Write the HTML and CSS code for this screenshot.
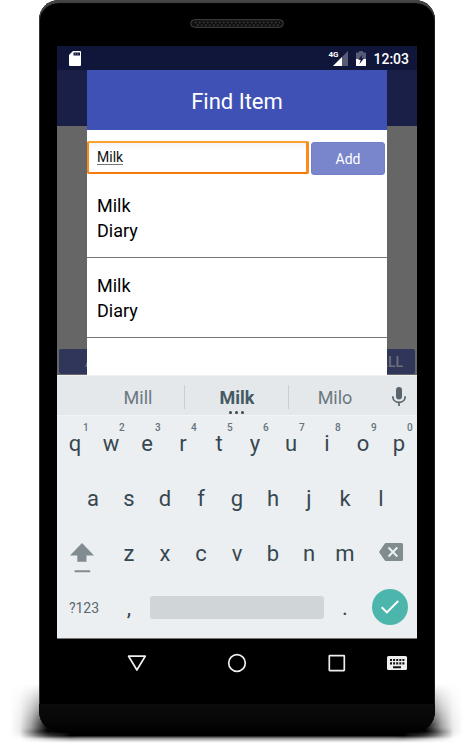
FILE: index.html
```html
<!DOCTYPE html>
<html lang="en">
<head>
<meta charset="utf-8">
<title>Find Item</title>
<link rel="stylesheet" href="styles.css">
</head>
<body>
<div class="stage">
  <div class="floor-shadow"></div>
  <div class="side-shadow side-left"></div>
  <div class="side-shadow side-right"></div>
  <main class="phone">
    <div class="earpiece">
      <svg width="94" height="9" viewBox="0 0 94 9"><rect x=".7" y=".7" width="92.6" height="7.6" rx="3.8" fill="#111" stroke="#454545"/><path d="M5 3.5H90M7 6H90" stroke="#3d3d3d" stroke-width="1.5" stroke-dasharray="1.5 2.5"/></svg>
    </div>
    <div class="screen">
      <header class="status">
        <svg class="sd" width="12" height="15" viewBox="0 0 12 15"><path d="M4 0H11Q12 0 12 1V14Q12 15 11 15H1Q0 15 0 14V4Z" fill="#fff"/><path d="M4.5 1.5H11V4.5H4.5Z" fill="#10153a"/><path d="M6.2 1.5V4M8.6 1.5V4" stroke="#9a9cae" stroke-width=".6"/></svg>
        <div class="status-right">
          <span class="net">4G</span>
          <svg class="signal" width="15" height="15" viewBox="0 0 15 15"><path d="M15 0V15H0Z" fill="#585b75"/><path d="M9 6V15H0Z" fill="#fff"/></svg>
          <svg class="battery" width="10" height="15" viewBox="0 0 10 15"><path d="M3 0H7V1.5H10V8H0V1.5H3Z" fill="#585b75"/><path d="M0 8H10V15H0Z" fill="#fff"/><path d="M6.4 3.6L2.2 8.8H4.7L3.4 13L8 7.4H5.6Z" fill="#10153a"/></svg>
          <span class="time">12:03</span>
        </div>
      </header>
      <section class="content">
        <div class="backdrop">
          <div class="appbar"></div>
          <div class="under"></div>
          <div class="bottom-actions"><span class="act">A</span><span class="act act-end">ALL</span></div>
        </div>
        <section class="dialog">
          <h1>Find Item</h1>
          <div class="search"><div class="field"><u>Milk</u></div><button class="add">Add</button></div>
          <div class="item"><p>Milk</p><p>Diary</p></div>
          <div class="item"><p>Milk</p><p>Diary</p></div>
        </section>
      </section>
      <section class="keyboard">
        <div class="suggestions">
          <span class="sug">Mill</span>
          <span class="sug sug-main">Milk<i class="dots"><b></b><b></b><b></b></i></span>
          <span class="sug sug-last">Milo</span>
          <svg class="mic" width="14" height="20" viewBox="0 0 14 20"><rect x="4" y="0" width="6" height="12.4" rx="3" fill="#58666c"/><path d="M.8 9.2C.8 13 3.6 15.4 7 15.4S13.2 13 13.2 9.2M7 15.4V19" fill="none" stroke="#58666c" stroke-width="1.7"/></svg>
        </div>
        <div class="row row-top">
          <span class="key">q<sup>1</sup></span><span class="key">w<sup>2</sup></span><span class="key">e<sup>3</sup></span><span class="key">r<sup>4</sup></span><span class="key">t<sup>5</sup></span><span class="key">y<sup>6</sup></span><span class="key">u<sup>7</sup></span><span class="key">i<sup>8</sup></span><span class="key">o<sup>9</sup></span><span class="key">p<sup>0</sup></span>
        </div>
        <div class="row">
          <span class="key">a</span><span class="key">s</span><span class="key">d</span><span class="key">f</span><span class="key">g</span><span class="key">h</span><span class="key">j</span><span class="key">k</span><span class="key">l</span>
        </div>
        <div class="row row-third">
          <span class="wide"><svg class="shift" width="24" height="30" viewBox="0 0 24 30"><path d="M12 0L24 12.5H16.5V18.7H7.3V12.5H0Z" fill="#808c90"/><path d="M4.6 28.3H20.2" stroke="#808c90" stroke-width="2"/></svg></span>
          <span class="key">z</span><span class="key">x</span><span class="key">c</span><span class="key">v</span><span class="key">b</span><span class="key">n</span><span class="key">m</span>
          <span class="wide"><svg class="del" width="24" height="18" viewBox="0 0 24 18"><path d="M7 0H22.5Q24 0 24 1.5V16.5Q24 18 22.5 18H7Q6 18 5.4 17L0 9L5.4 1Q6 0 7 0Z" fill="#808c90"/><path d="M9.5 4.5L18.3 13.5M18.3 4.5L9.5 13.5" stroke="#ebeff2" stroke-width="2"/></svg></span>
        </div>
        <div class="row row-bottom">
          <span class="symbols">?123</span><span class="key">,</span><span class="space"></span><span class="key">.</span>
          <span class="enter"><svg width="36" height="36" viewBox="0 0 36 36"><circle cx="18" cy="18" r="18" fill="#4db6ac"/><path d="M9.7 18.2L14.9 23.4L26.2 12" fill="none" stroke="#fff" stroke-width="2"/></svg></span>
        </div>
      </section>
    </div>
    <nav class="nav">
      <svg width="360" height="24" viewBox="0 0 360 24"><g fill="none" stroke="#eee" stroke-width="1.7" stroke-linejoin="round"><path d="M71.6 5.2H88.2L79.9 19Z"/><circle cx="180" cy="12" r="8.3"/><rect x="272.3" y="4.6" width="15" height="15" rx=".5"/></g><rect x="330" y="5" width="20" height="14" rx="1.5" fill="#eee"/><path d="M333 9H347.5M333 12.4H347.5" stroke="#111" stroke-width="2.2" stroke-dasharray="2 1.1"/><path d="M336 16.2H344" stroke="#111" stroke-width="2"/></svg>
    </nav>
    <div class="chin"></div>
  </main>
</div>
</body>
</html>
```
FILE: styles.css
```css
* { box-sizing: border-box; }
body { margin: 0; background: #fff; font-family: Roboto, "Liberation Sans", sans-serif; overflow: hidden; }
.stage { position: relative; width: 473px; height: 745px; overflow: hidden; padding-left: 38.5px; }
.floor-shadow { position: absolute; left: 20px; top: 727px; width: 434px; height: 16px;
  background: linear-gradient(transparent, #000 35% 54%, rgba(0,0,0,.4) 72%, rgba(0,0,0,.1) 90%, transparent);
  -webkit-mask-image: linear-gradient(90deg, transparent, #000 50px calc(100% - 50px), transparent); }
.side-shadow { position: absolute; top: 684px; width: 72px; height: 55px;
  -webkit-mask-image: linear-gradient(transparent, rgba(0,0,0,.55) 45%, #000 75% 86%, transparent); }
.side-left { left: 8px; background: linear-gradient(90deg, transparent 2px, rgba(0,0,0,.08) 12px, rgba(0,0,0,.35) 23px, #000 40px 48px, transparent); }
.side-right { right: 8px; background: linear-gradient(270deg, transparent 2px, rgba(0,0,0,.08) 12px, rgba(0,0,0,.35) 23px, #000 40px 48px, transparent); }
.phone { position: relative; width: 396.5px; height: 733px; border-radius: 20px 20px 22px 22px; background: #000;
  box-shadow: inset 0 3px 1px #454545, inset 1px 0 0 #333, inset -1px 0 0 #171717; overflow: hidden; }
.earpiece { height: 46px; padding: 18.5px 0 0 151px; }
.earpiece svg { display: block; }
.screen { width: 360px; height: 592.5px; margin-left: 18.5px; background: #666; display: flex; flex-direction: column; }
.status { height: 24px; background: #10153a; display: flex; justify-content: space-between; padding: 0 8px 0 12px; }
.sd { margin-top: 5px; }
.status-right { display: flex; color: #fff; }
.net { font-size: 8px; line-height: 9px; font-weight: 700; margin: 4px -5px 0 0; }
.signal { margin: 5px 8px 0 0; }
.battery { margin: 5px 7px 0 0; }
.time { font-size: 14px; line-height: 26px; font-weight: 500; }
.content { position: relative; height: 305px; flex: none; }
.backdrop { height: 100%; display: flex; flex-direction: column; background: #666; }
.appbar { height: 56px; background: #191f47; }
.under { flex: 1; }
.bottom-actions { height: 26px; display: flex; gap: 4px; padding: 0 2px 1px 2px; }
.act { flex: 1; background: #30365a; border-radius: 2px; color: #6e7078; font-size: 14px; line-height: 26px; font-weight: 500; padding-left: 26px; }
.act-end { text-align: right; padding-right: 12px; }
.dialog { position: absolute; left: 30px; top: 0; width: 300px; height: 305px; background: #fff; overflow: hidden; }
h1 { margin: 0; height: 60px; background: #3f51b5; color: #fff; text-align: center; font-size: 22px; line-height: 63px; font-weight: 400; }
.search { display: flex; padding: 11px 2px 0 0; height: 46px; gap: 2px; }
.field { width: 222px; height: 32.5px; border: solid #fb8c1a; border-width: 2px 3px 2px 2px; border-radius: 2px; padding-left: 8px; font-size: 14px; line-height: 28px; color: #111; background: linear-gradient(#f5f5f5, #fff 30%); border-color: #fba233 #fb8c1a #f47b0c; }
.field u { text-decoration: none; border-bottom: 1.5px solid #777; display: inline-block; line-height: 14px; }
.add { width: 74px; height: 33px; margin-top: 1px; border: 1px solid #7280c5; border-radius: 3px; background: #7986cb; color: #fff; font: 14px Roboto, sans-serif; padding: 1px 0 0; }
.item { height: 82px; border-bottom: 1px solid #777; padding: 17px 10px 0; font-size: 18px; line-height: 25px; color: #000; }
.item:last-child { height: 80px; padding-top: 15px; }
.item p { margin: 0; }
.keyboard { flex: 1; background: #ebeff2; color: #37474f; border-bottom: 1px solid #777; }
.suggestions { height: 41px; display: flex; align-items: center; background: #e4e8eb; border-top: 1px solid #eff1f2; padding-left: 24px; border-bottom: 1px solid #f1f4f6; }
.sug { position: relative; width: 104px; height: 24px; border-right: 1px solid #c9ced1; text-align: center; font-size: 18px; line-height: 26px; color: #6b787e; margin-top: 2px; padding-left: 11px; }
.sug-main { font-weight: 700; color: #455a64; padding-left: 1px; }
.sug-last { border: 0; padding: 0 12px 0 0; }
.dots { position: absolute; left: 44px; top: 26px; display: flex; gap: 3px; }
.dots b { width: 3px; height: 3px; border-radius: 50%; background: #37474f; }
.mic { margin: 2px 0 0 -1px; }
.row { height: 55px; display: flex; justify-content: center; font-size: 22px; line-height: 56px; }
.row-third { height: 54px; }
.key { position: relative; width: 36px; text-align: center; }
sup { position: absolute; left: 26px; top: 6px; font-size: 10px; line-height: 12px; font-weight: 500; color: #65747b; }
.wide { width: 54px; }
.wide svg { display: block; }
.shift { margin: 16.5px 0 0 12.5px; }
.del { margin: 17px 0 0 16px; }
.symbols { width: 54px; font-size: 14px; line-height: 56px; text-align: center; color: #59676e; }
.space { width: 174px; height: 23px; margin: 15.5px 3px 0; background: #d0d5d8; border-radius: 3px; }
.enter { width: 54px; padding: 9px 0 0 9px; }
.enter svg { display: block; }
.nav { height: 65px; padding: 12px 0 0 18.5px; }
.nav svg { display: block; }
.chin { height: 29.5px; background: linear-gradient(#0b0b0b, #060606 65%, #000); }
```
